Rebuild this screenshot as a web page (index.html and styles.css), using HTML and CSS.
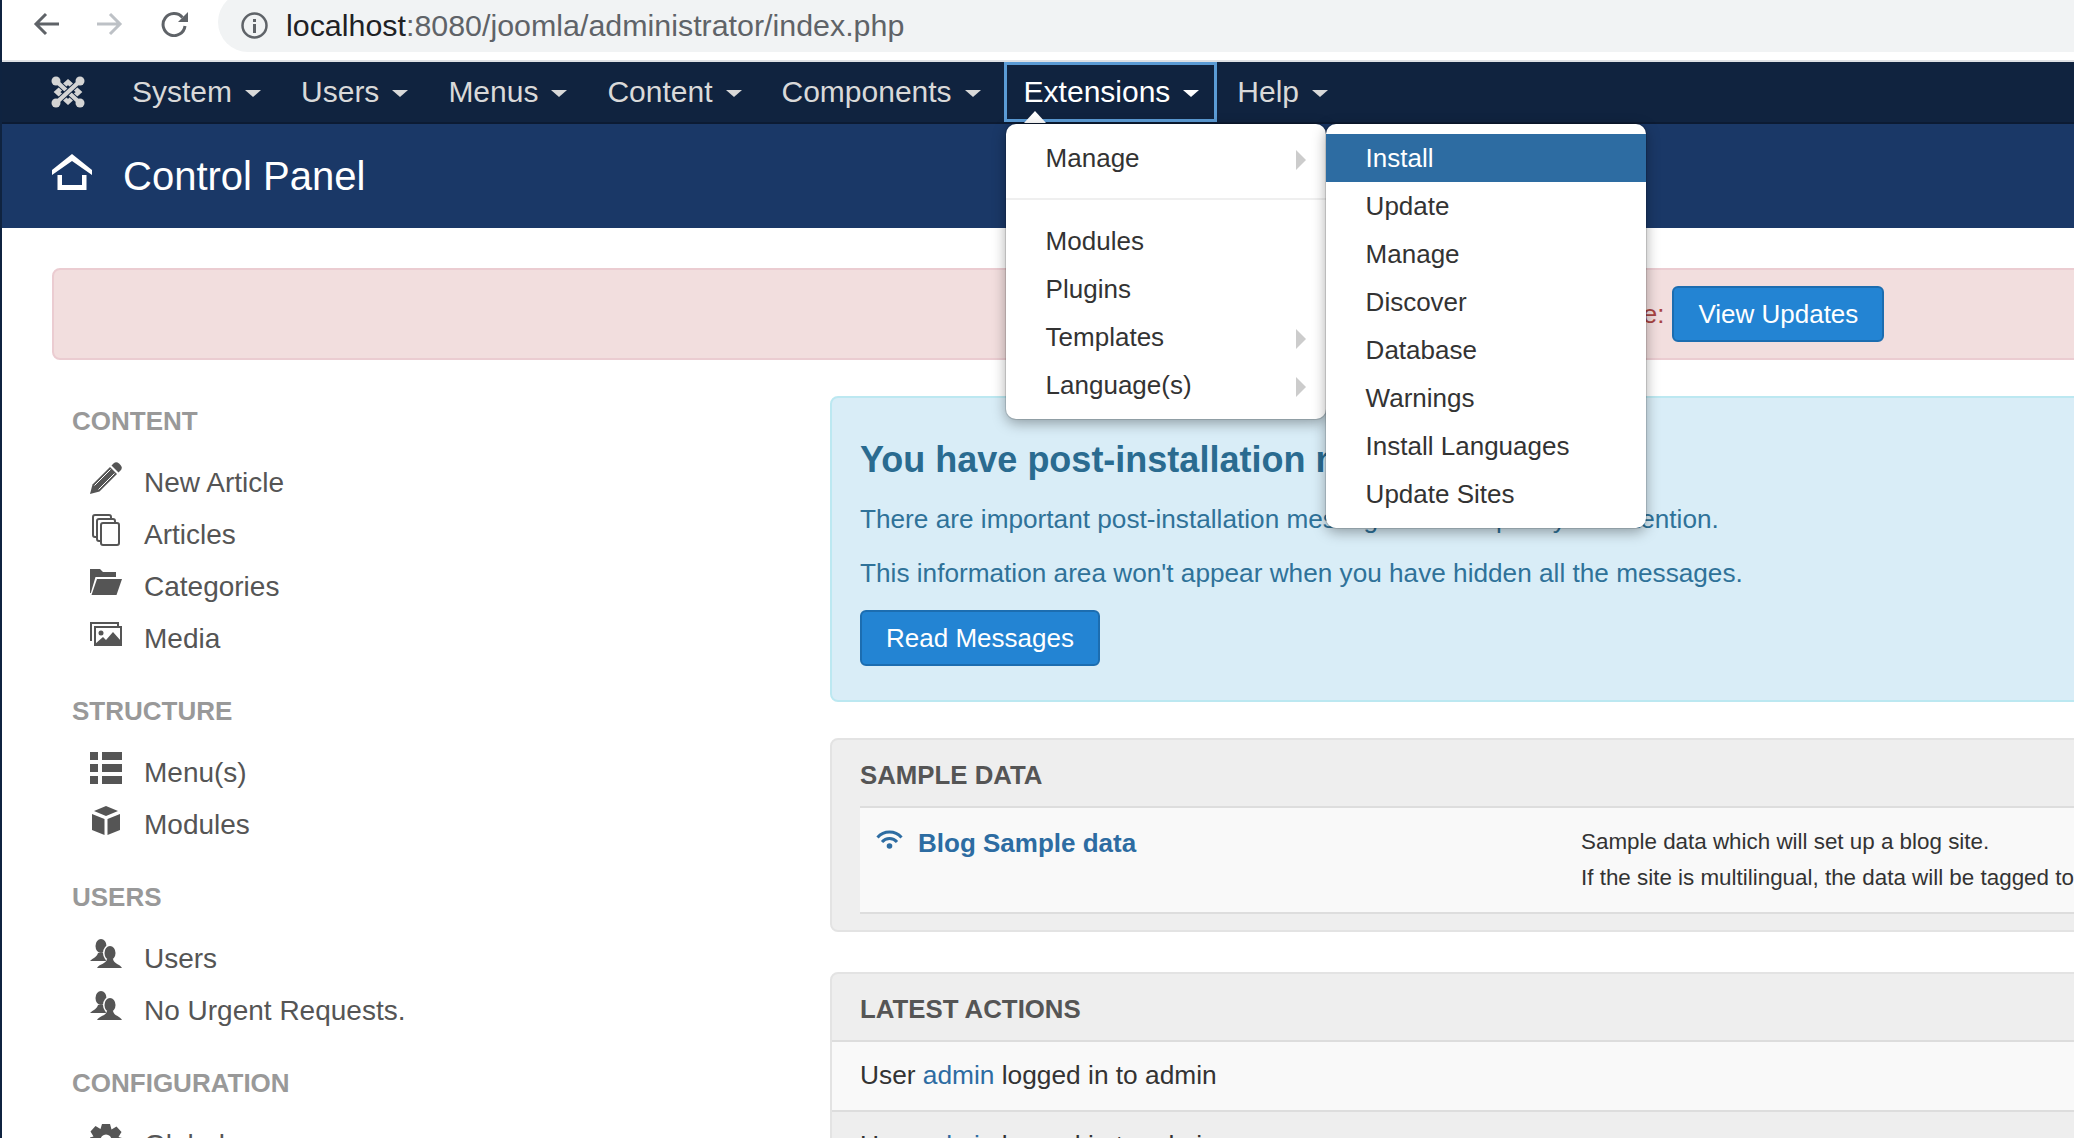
FILE: index.html
```html
<!DOCTYPE html>
<html lang="en">
<head>
<meta charset="utf-8">
<title>Control Panel</title>
<link rel="stylesheet" href="styles.css">
</head>
<body>
<div class="toolbar">
  <svg class="tb-icon" width="26" height="24" viewBox="0 0 26 24"><path d="M26 12H3M13 2 3 12l10 10" fill="none" stroke="#5f6368" stroke-width="3"/></svg>
  <svg class="tb-icon" width="26" height="24" viewBox="0 0 26 24"><path d="M0 12h23M13 2l10 10-10 10" fill="none" stroke="#bdc1c6" stroke-width="3"/></svg>
  <svg class="tb-icon tb-reload" width="27" height="26" viewBox="0 0 27 26"><path d="M21.5 6.5A11 11 0 1 0 24 15" fill="none" stroke="#5f6368" stroke-width="3"/><path d="M27 1v10H17z" fill="#5f6368"/></svg>
  <div class="url">
    <svg class="url-info" width="27" height="27" viewBox="0 0 27 27"><circle cx="13.5" cy="13.5" r="12" fill="none" stroke="#5f6368" stroke-width="2.5"/><rect x="12" y="7" width="3" height="3" fill="#5f6368"/><rect x="12" y="12" width="3" height="9" fill="#5f6368"/></svg>
    <span class="url-text"><span class="url-host">localhost</span>:8080/joomla/administrator/index.php</span>
  </div>
</div>

<nav class="nav">
  <svg class="logo" width="34" height="32" viewBox="0 0 34 32">
    <path d="M17 6 28 16 17 26 6 16z" fill="none" stroke="#d4d4d4" stroke-width="4.500"/>
    <g fill="none">
      <path d="M5 5 29 27" stroke="#10233f" stroke-width="5.800"/><path d="M5 5 29 27" stroke="#d4d4d4" stroke-width="4.200"/>
      <path d="M29 5 5 27" stroke="#10233f" stroke-width="5.800"/><path d="M29 5 5 27" stroke="#d4d4d4" stroke-width="4.200"/>
    </g>
    <g fill="#d4d4d4"><circle cx="5" cy="5" r="4.500"/><circle cx="29" cy="5" r="4.500"/><circle cx="5" cy="27" r="4.500"/><circle cx="29" cy="27" r="4.500"/></g>
  </svg>
  <ul class="nav-list">
    <li class="nav-item">System<span class="caret"></span></li>
    <li class="nav-item">Users<span class="caret"></span></li>
    <li class="nav-item">Menus<span class="caret"></span></li>
    <li class="nav-item">Content<span class="caret"></span></li>
    <li class="nav-item">Components<span class="caret"></span></li>
    <li class="nav-item nav-open">Extensions<span class="caret"></span>
      <span class="notch"></span>
      <ul class="menu menu-main">
        <li class="menu-row has-sub">Manage</li>
        <li class="menu-divider"></li>
        <li class="menu-row">Modules</li>
        <li class="menu-row">Plugins</li>
        <li class="menu-row has-sub">Templates</li>
        <li class="menu-row has-sub">Language(s)</li>
        <li class="menu-subwrap">
          <ul class="menu menu-sub">
            <li class="menu-row active">Install</li>
            <li class="menu-row">Update</li>
            <li class="menu-row">Manage</li>
            <li class="menu-row">Discover</li>
            <li class="menu-row">Database</li>
            <li class="menu-row">Warnings</li>
            <li class="menu-row">Install Languages</li>
            <li class="menu-row">Update Sites</li>
          </ul>
        </li>
      </ul>
    </li>
    <li class="nav-item">Help<span class="caret"></span></li>
  </ul>
</nav>

<header class="subhead">
  <svg class="home" width="40" height="36" viewBox="0 0 40 36"><path d="M20 0 40 16v5L20 7 0 21v-5z" fill="#fff"/><path d="M5.5 21H10v10h20V21h4.500v15h-29z" fill="#fff"/></svg>
  <h1 class="page-title">Control Panel</h1>
</header>

<main class="page">
  <div class="alert-update">
    <span>Updates are available:</span>
    <a class="btn">View Updates</a>
  </div>
  <div class="columns">
    <aside class="sidebar">
      <section class="side-section">
        <h2 class="side-title">CONTENT</h2>
        <ul class="side-list">
          <li class="side-item"><span class="side-icon"><svg width="32" height="32" viewBox="0 0 32 32"><path d="M23.500 1.500a4 4 0 0 1 5.500 0l1.500 1.500a4 4 0 0 1 0 5.500L28.500 10.500 21.500 3.500z" fill="#555"/><path d="M20 5l7 7L9.500 29.500 0 32l2.500-9.500z" fill="#555"/><path d="M4.500 23.500 20.500 7.500M8.500 27.500l16-16" stroke="#fff" stroke-width="1"/></svg></span>New Article</li>
          <li class="side-item"><span class="side-icon"><svg width="28" height="32" viewBox="0 0 28 32"><g fill="none" stroke="#555" stroke-width="2"><rect x="9" y="9" width="18" height="22" rx="2"/><path d="M9 27H7a2 2 0 0 1-2-2V7a2 2 0 0 1 2-2h14a2 2 0 0 1 2 2v2"/><path d="M5 23H3a2 2 0 0 1-2-2V3a2 2 0 0 1 2-2h14a2 2 0 0 1 2 2v2"/></g></svg></span>Articles</li>
          <li class="side-item"><span class="side-icon"><svg width="32" height="26" viewBox="0 0 32 26"><path d="M0 24V0h10l3 3h13v5H5.500L.8 24zM7 10h25l-5.500 16H1.500z" fill="#555"/></svg></span>Categories</li>
          <li class="side-item"><span class="side-icon"><svg width="32" height="24" viewBox="0 0 32 24"><g fill="none" stroke="#555" stroke-width="2"><path d="M1 19V1h27v3"/><rect x="5" y="5" width="26" height="18"/></g><circle cx="11" cy="11" r="2.500" fill="#555"/><path d="M5 22l8-7 3 3 7-8 8 9v3H5z" fill="#555"/></svg></span>Media</li>
        </ul>
      </section>
      <section class="side-section">
        <h2 class="side-title">STRUCTURE</h2>
        <ul class="side-list">
          <li class="side-item"><span class="side-icon"><svg width="32" height="32" viewBox="0 0 32 32"><path d="M0 0h8v8H0zM12 0h20v8H12zM0 12h8v8H0zM12 12h20v8H12zM0 24h8v8H0zM12 24h20v8H12z" fill="#555"/></svg></span>Menu(s)</li>
          <li class="side-item"><span class="side-icon"><svg width="32" height="32" viewBox="0 0 32 32"><path d="M16 2l12 5-12 5L4 7zM2 10l12.500 5v16L2 26zM30 10l-12.500 5v16L30 26z" fill="#555"/></svg></span>Modules</li>
        </ul>
      </section>
      <section class="side-section">
        <h2 class="side-title">USERS</h2>
        <ul class="side-list">
          <li class="side-item"><span class="side-icon"><svg width="32" height="30" viewBox="0 0 32 30"><use href="#users-glyph"/></svg></span>Users</li>
          <li class="side-item"><span class="side-icon"><svg width="32" height="30" viewBox="0 0 32 30"><use href="#users-glyph"/></svg></span>No Urgent Requests.</li>
        </ul>
      </section>
      <section class="side-section">
        <h2 class="side-title">CONFIGURATION</h2>
        <ul class="side-list">
          <li class="side-item"><span class="side-icon"><svg width="32" height="32" viewBox="0 0 32 32"><path d="M12 0h8l1.500 5.500 5-3 5 5.500-3 5 3.500 1v5l-3.500 1 3 5-5 5.500-5-3L20 32h-8l-1.500-5.500-5 3-5-5.500 3-5L0 18.500v-5l3.500-1-3-5 5-5.500 5 3z" fill="#555"/><circle cx="16" cy="16" r="5.500" fill="#fff"/></svg></span>Global</li>
        </ul>
      </section>
    </aside>

    <div class="content">
      <div class="info-box">
        <h2 class="info-title">You have post-installation messages</h2>
        <p class="info-text">There are important post-installation messages that require your attention.</p>
        <p class="info-text">This information area won't appear when you have hidden all the messages.</p>
        <a class="btn info-btn">Read Messages</a>
      </div>

      <div class="panel">
        <h3 class="panel-title">SAMPLE DATA</h3>
        <div class="sample-row">
          <div class="sample-name">
            <svg class="wifi" width="27" height="19" viewBox="0 0 27 19"><g fill="none" stroke="#2d6ca2" stroke-width="3"><path d="M1.500 7.500a16 16 0 0 1 24 0"/><path d="M6 12a10 10 0 0 1 15 0"/></g><circle cx="13.500" cy="16" r="2.800" fill="#2d6ca2"/></svg>
            <a class="sample-link">Blog Sample data</a>
          </div>
          <div class="sample-desc">
            <p>Sample data which will set up a blog site.</p>
            <p>If the site is multilingual, the data will be tagged to the active language.</p>
          </div>
        </div>
      </div>

      <div class="panel panel-actions">
        <h3 class="panel-title">LATEST ACTIONS</h3>
        <div class="action-row">User <a class="action-link">admin</a> logged in to admin</div>
        <div class="action-row action-alt">User <a class="action-link">admin</a> logged in to admin</div>
      </div>
    </div>
  </div>
</main>

<svg class="defs" width="0" height="0">
  <defs>
    <g id="users-glyph">
      <ellipse cx="11" cy="7" rx="5.500" ry="7" fill="#555"/>
      <path d="M0 22c3-3 7-4 8-8h6l2 8z" fill="#555"/>
      <ellipse cx="20" cy="14" rx="7" ry="8.500" fill="#fff"/>
      <ellipse cx="20" cy="14" rx="5.500" ry="7" fill="#555"/>
      <path d="M7 29c2-4 9-4 10-9h6c1 5 7 5 9 9z" fill="#555"/>
    </g>
  </defs>
</svg>
</body>
</html>
```

FILE: styles.css
```css
* { box-sizing: border-box; }
html, body { height: 100%; overflow: hidden; }
body {
  margin: 0;
  width: 2074px;
  height: 1138px;
  border-left: 2px solid #0f2340;
  background: #fff;
  font-family: "Liberation Sans", Arial, sans-serif;
  color: #333;
}
ul { list-style: none; margin: 0; padding: 0; }
h1, h2, h3, p { margin: 0; }
.defs { position: absolute; }

/* browser toolbar */
.toolbar {
  display: flex;
  align-items: flex-start;
  height: 62px;
  padding-left: 31px;
  border-bottom: 2px solid #dfe1e5;
  overflow: hidden;
  background: #fff;
}
.tb-icon { flex: none; margin: 12px 38px 0 0; }
.tb-reload { margin: 11px 30px 0 0; }
.url {
  flex: 1;
  display: flex;
  align-items: center;
  height: 60px;
  margin-top: -8px;
  padding: 6px 0 0 23px;
  border-radius: 30px 0 0 30px;
  background: #f1f3f4;
  font-size: 30.400px;
  color: #5f6368;
}
.url-info { flex: none; margin: 0 18px 0 0; }
.url-host { color: #202124; }

/* top nav */
.nav {
  display: flex;
  align-items: center;
  height: 62px;
  padding-left: 49px;
  background: #10233f;
  border-bottom: 2px solid #0c1b33;
  position: relative;
  z-index: 5;
}
.logo { flex: none; margin: 0 27px 0 0; }
.nav-list { display: flex; height: 60px; }
.nav-item {
  position: relative;
  display: flex;
  align-items: center;
  padding: 0 20px;
  font-size: 30px;
  color: #d9d9d9;
  white-space: nowrap;
}
.caret {
  width: 0;
  height: 0;
  margin-left: 13px;
  border-left: 8px solid transparent;
  border-right: 8px solid transparent;
  border-top: 7px solid currentColor;
  margin-top: 2px;
}
.nav-open {
  color: #fff;
  margin-left: 3px;
  padding: 0 15px 0 17px;
  border: 3px solid #5b9bd5;
}
.notch {
  position: absolute;
  left: 17px;
  bottom: -4px;
  width: 0;
  height: 0;
  border-left: 11px solid transparent;
  border-right: 11px solid transparent;
  border-bottom: 12px solid #fff;
}
.menu {
  position: absolute;
  width: 320px;
  padding: 10px 0;
  background: #fff;
  border-radius: 10px;
  box-shadow: 0 4px 14px rgba(0, 0, 0, .35), 0 0 0 1px rgba(0, 0, 0, .12);
  font-size: 26px;
  color: #333;
}
.menu-main { left: -1px; top: 59px; }
.menu-subwrap { position: static; }
.menu-sub { left: 100%; top: 0; }
.menu-row {
  position: relative;
  height: 48px;
  padding: 5.500px 40px;
  line-height: 36px;
}
.active { background: #2d6ca2; color: #fff; }
.menu-divider { height: 2px; margin: 16px 0 17px; background: #efefef; }
.has-sub::after {
  content: "";
  position: absolute;
  right: 20px;
  top: 16px;
  border-left: 10px solid #ccc;
  border-top: 10px solid transparent;
  border-bottom: 10px solid transparent;
}

/* sub header */
.subhead {
  display: flex;
  align-items: center;
  height: 104px;
  padding-left: 50px;
  background: #1a3867;
  color: #fff;
}
.home { flex: none; margin: 0 31px 8px 0; }
.page-title { font-size: 40px; font-weight: 400; line-height: 48px; }

/* page body */
.page { width: 3236px; padding: 40px 0 0 50px; }
.alert-update {
  display: flex;
  align-items: center;
  justify-content: center;
  gap: 8px;
  height: 92px;
  border: 2px solid #ebccd1;
  border-radius: 8px;
  background: #f2dede;
  color: #a94442;
  font-size: 26px;
}
.btn {
  display: inline-block;
  height: 56px;
  padding: 0 24px;
  border: 2px solid #1c6db0;
  border-radius: 6px;
  background: #2384d3;
  color: #fff;
  font-size: 26px;
  line-height: 52px;
}
.columns { display: flex; margin-top: 36px; }

/* sidebar */
.sidebar { flex: none; width: 778px; padding: 7px 0 0 20px; }
.side-section { margin-bottom: 28px; }
.side-title {
  font-size: 26px;
  font-weight: 700;
  line-height: 36px;
  color: #999;
}
.side-list { margin-top: 18px; padding-left: 18px; }
.side-item {
  display: flex;
  align-items: center;
  height: 52px;
  font-size: 28px;
  color: #555;
}
.side-icon {
  flex: none;
  display: flex;
  align-items: center;
  justify-content: center;
  width: 32px;
  height: 32px;
  margin: 0 22px 10px 0;
}

/* right column */
.content { flex: 1; min-width: 0; }
.info-box {
  height: 306px;
  padding: 40px 28px 0;
  border: 2px solid #bce8f1;
  border-radius: 8px;
  background: #d9edf7;
  color: #2f7299;
  font-size: 26.200px;
}
.info-title {
  margin-bottom: 19px;
  font-size: 36px;
  line-height: 44px;
  color: #2a6b90;
}
.info-text { margin-bottom: 18px; line-height: 36px; }
.info-btn { margin-top: 1px; }
.panel {
  margin-top: 36px;
  border: 2px solid #e3e3e3;
  border-radius: 8px;
  background: #eee;
  padding-bottom: 16px;
}
.panel-title {
  height: 66px;
  padding: 17px 0 0 28px;
  font-size: 25.800px;
  line-height: 36px;
  color: #555;
}
.sample-row {
  display: flex;
  height: 108px;
  margin-left: 28px;
  border-top: 2px solid #ddd;
  border-bottom: 2px solid #ddd;
  background: #f9f9f9;
}
.sample-name {
  flex: none;
  display: flex;
  align-items: flex-start;
  width: 721px;
  padding: 17px 0 0 16px;
}
.wifi { flex: none; margin: 5px 15px 0 0; }
.sample-link { font-size: 26px; font-weight: 700; line-height: 36px; color: #2d6ca2; }
.sample-desc { padding-top: 16px; font-size: 22.400px; line-height: 36px; color: #333; white-space: nowrap; }
.panel-actions { margin-top: 40px; padding-bottom: 0; }
.action-row {
  height: 70px;
  padding-left: 28px;
  border-top: 2px solid #ddd;
  background: #f9f9f9;
  font-size: 26.300px;
  line-height: 67px;
  color: #333;
}
.action-alt { background: #eee; }
.action-link { color: #2d6ca2; }
```
